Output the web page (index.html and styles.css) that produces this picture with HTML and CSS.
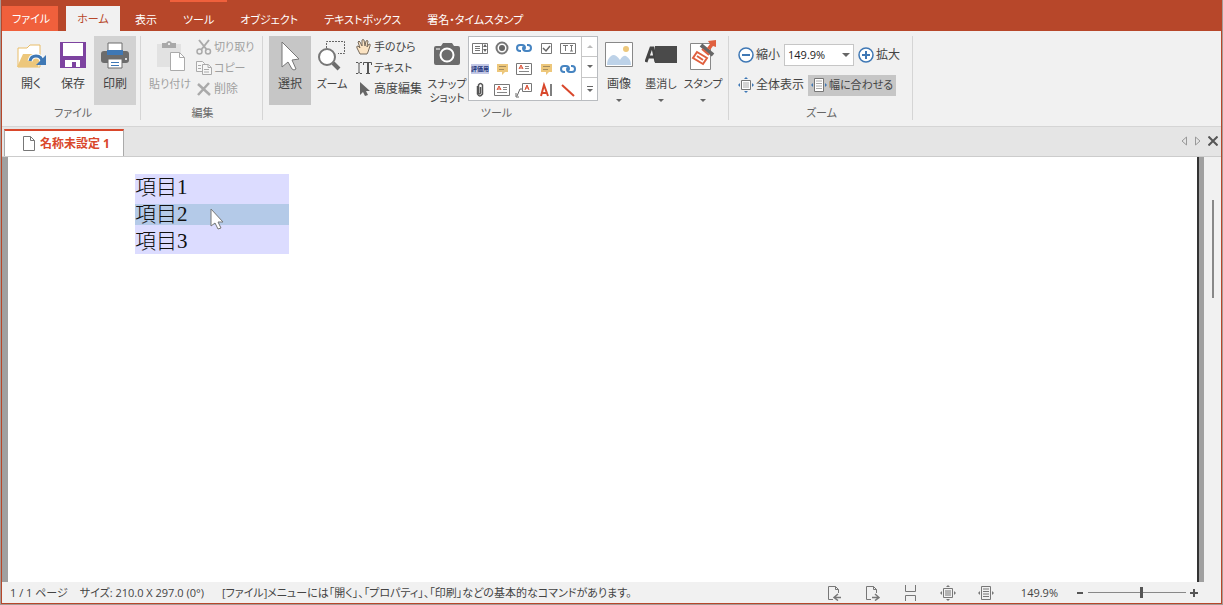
FILE: index.html
```html
<!DOCTYPE html>
<html lang="ja">
<head>
    <meta charset="UTF-8">
    <meta name="viewport" content="width=device-width, initial-scale=1.0">
    <title>名称未設定 1</title>
    <link rel="stylesheet" href="styles.css">
</head>
<body>
    <div class="window">
        <nav class="menu">
            <button type="button" class="menu-tab file">ファイル</button>
            <button type="button" class="menu-tab home active">ホーム</button>
            <button type="button" class="menu-tab">表示</button>
            <button type="button" class="menu-tab tool-context">ツール</button>
            <button type="button" class="menu-tab">オブジェクト</button>
            <button type="button" class="menu-tab">テキストボックス</button>
            <button type="button" class="menu-tab">署名・タイムスタンプ</button>
        </nav>

        <div class="ribbon">
            <!-- ファイル -->
            <section class="group">
                <div class="tools">
                    <button type="button" class="big">
                        <svg width="32" height="32" viewBox="0 0 32 32"><path d="M3 27V8h9l3-3h10v22z" fill="#fff" stroke="#e9bd68"/><path d="M2 27 8 14h18l-3 13z" fill="#edc77b"/><path d="M15 21q1-5 6-5 6 0 6 6" fill="none" stroke="#fff" stroke-width="5"/><path d="M15 21q1-5 6-5 6 0 6 6" fill="none" stroke="#3f78b5" stroke-width="3"/><path d="M31 15v10H21z" fill="#3f78b5"/></svg>
                        <span>開く</span>
                    </button>
                    <button type="button" class="big">
                        <svg width="32" height="32" viewBox="0 0 32 32"><path d="M3 2h26v26H3z" fill="#7d43a0"/><path d="M6 3h20v13H6zM8 20h15v7h-4v-5h-4v5H8z" fill="#fff"/></svg>
                        <span>保存</span>
                    </button>
                    <button type="button" class="big pressed">
                        <svg width="32" height="32" viewBox="0 0 32 32"><rect x="2" y="11" width="28" height="12" rx="3" fill="#6c6c6c"/><path d="M9 3h14v8H9z" fill="#fff" stroke="#6c6c6c"/><path d="M8 10h16v5H8z" fill="#3f78b5"/><path d="M9 19h14v9H9z" fill="#fff" stroke="#6c6c6c"/><path d="M12 22.500h8M12 25.500h8" stroke="#3f78b5"/><circle cx="27" cy="19" r="1" fill="#fff"/></svg>
                        <span>印刷</span>
                    </button>
                </div>
                <h2>ファイル</h2>
            </section>

            <!-- 編集 -->
            <section class="group">
                <div class="tools">
                    <button type="button" class="big wide compact" disabled>
                        <svg width="32" height="32" viewBox="0 0 32 32"><path d="M3 4h24v23H3z" fill="#e2e2e2"/><path d="M8 3h4q3-4 6 0h4v5H8z" fill="#a9a9a9"/><circle cx="15" cy="4" r="1" fill="#fff"/><path d="M16.500 12.500h9l5 5v13h-14z" fill="#fff" stroke="#aaa"/><path d="M25.500 12.500v5h5" fill="none" stroke="#aaa"/></svg>
                        <span>貼り付け</span>
                    </button>
                    <div class="stack edit-stack">
                        <button type="button" class="small compact" disabled>
                            <svg width="16" height="16" viewBox="0 0 16 16"><path d="m3 1 8 10M13 1 5 11" stroke="#aaa" stroke-width="2"/><circle cx="3.500" cy="12.500" r="2.500" fill="none" stroke="#aaa" stroke-width="1.500"/><circle cx="12" cy="12.500" r="2.500" fill="none" stroke="#aaa" stroke-width="1.500"/></svg>
                            切り取り
                        </button>
                        <button type="button" class="small compact" disabled>
                            <svg width="16" height="16" viewBox="0 0 16 16" fill="#f7f7f7" stroke="#aaa"><path d="M.5 1.500h6l2 2v8h-8z"/><path d="M2 5.500h3M2 8.500h3"/><path d="M6.500 4.500h6l3 3v7h-9z"/><path d="M12 4.500v3h3M8 9.500h5M8 12h5"/></svg>
                            コピー
                        </button>
                        <button type="button" class="small" disabled>
                            <svg width="16" height="16" viewBox="0 0 16 16"><path d="m2 3 12 11M13 2 2 14" stroke="#aaa" stroke-width="2.500"/></svg>
                            削除
                        </button>
                    </div>
                </div>
                <h2>編集</h2>
            </section>

            <!-- ツール -->
            <section class="group">
                <div class="tools">
                    <button type="button" class="big selected">
                        <svg width="32" height="32" viewBox="0 0 32 32"><path d="M8 2v25l6-5 4 7q2 2 4 0l-4-9 7-1z" fill="#fff" stroke="#777"/></svg>
                        <span>選択</span>
                    </button>
                    <button type="button" class="big compact">
                        <svg width="32" height="32" viewBox="0 0 32 32"><path d="M10.500 8V1.500h18v12H22" fill="none" stroke="#666" stroke-dasharray="2 1"/><circle cx="11" cy="17" r="8" fill="#fff" stroke="#777" stroke-width="2"/><path d="m17 23 6 6" stroke="#6c6c6c" stroke-width="4"/></svg>
                        <span>ズーム</span>
                    </button>
                    <div class="stack mode-stack">
                        <button type="button" class="small compact">
                            <svg width="16" height="16" viewBox="0 0 16 16"><path d="M4 15 1 9Q0 7 2 7l2 2-2-6q1-2 2 0l2 4V1q1-1 2 0l1 6 1-5q1-1 2 0l-1 6 2-3q2 0 1 2l-2 6-1 2z" fill="#fbe3c2" stroke="#776b5d"/></svg>
                            手のひら
                        </button>
                        <button type="button" class="small compact">
                            <svg width="16" height="16" viewBox="0 0 16 16" fill="none" stroke="#555"><path d="M0 2.500h2l1 1 1-1h2M3 3v10M0 13.500h2l1-1 1 1h2M7.500 5V2.500h8V5M10 13.500h4"/><path d="M12 3v10" stroke-width="2"/></svg>
                            テキスト
                        </button>
                        <button type="button" class="small">
                            <svg width="16" height="16" viewBox="0 0 16 16"><path d="M4 1v13l3-3 2 4 3-1-2-4h4z" fill="#666"/></svg>
                            高度編集
                        </button>
                    </div>
                    <button type="button" class="big compact">
                        <svg width="32" height="32" viewBox="0 0 32 32"><path d="M3 8q0-2 2-2h5l2-3h9l2 3h4q2 0 2 2v15q0 2-2 2H5q-2 0-2-2z" fill="#6c6c6c"/><circle cx="16" cy="15" r="6.500" fill="none" stroke="#fff" stroke-width="2"/><path d="M5 9h4" stroke="#fff"/></svg>
                        <span>スナップ<br>ショット</span>
                    </button>

                    <div class="gallery">
                        <div class="gallery-grid">
                            <button type="button" aria-label="リストボックス"><svg width="18" height="16" viewBox="0 0 18 16" fill="none" stroke="#777"><path d="M1.500 3.500h15v10h-15zM11.500 3v10M4 6.500h5M4 8.500h5M4 10.500h5"/><path d="m14 4 2 3h-4zM14 12l2-3h-4z" fill="#666" stroke="none"/></svg></button>
                            <button type="button" aria-label="ラジオボタン"><svg width="18" height="16" viewBox="0 0 18 16"><circle cx="9" cy="8" r="5.500" fill="#fff" stroke="#777" stroke-width="2"/><circle cx="9" cy="8" r="3" fill="#666"/></svg></button>
                            <button type="button" aria-label="リンク"><svg width="18" height="16" viewBox="0 0 18 16" fill="none" stroke="#4684c1" stroke-width="2"><path d="M6 11H5Q2 11 2 8t3-3h2q3 0 3 3 0 1-1 1"/><path d="M12 5h1q3 0 3 3t-3 3h-2q-3 0-3-3 0-1 1-1"/></svg></button>
                            <button type="button" aria-label="チェックボックス"><svg width="18" height="16" viewBox="0 0 18 16"><path d="M4.500 3.500h10v10h-10z" fill="#fff" stroke="#777"/><path d="m6 8 3 3 4-5" fill="none" stroke="#666" stroke-width="1.500"/></svg></button>
                            <button type="button" aria-label="テキストフィールド"><svg width="18" height="16" viewBox="0 0 18 16" fill="none" stroke="#777"><path d="M1.500 3.500h15v10h-15zM4 5.500h5M6.500 5v6M11 5.500h3M12.500 5v6M11 11h3"/></svg></button>

                            <button type="button" class="mark">評価用</button>
                            <button type="button" aria-label="注釈"><svg width="18" height="16" viewBox="0 0 18 16"><path d="M4 3h11v8h-3l-3 3v-3H4z" fill="#edc77b"/><path d="M6 5.500h7M6 8.500h5" stroke="#a58c5d"/></svg></button>
                            <button type="button" aria-label="テキストボックス"><svg width="18" height="16" viewBox="0 0 18 16"><path d="M1.500 2.500h15v11h-15z" fill="#fff" stroke="#777"/><path d="m4 8 2-4 2 4M4.500 7h3" fill="none" stroke="#d9472b"/><path d="M10 5.500h4M10 7.500h4M4 10.500h10" stroke="#888"/></svg></button>
                            <button type="button" aria-label="コメント"><svg width="18" height="16" viewBox="0 0 18 16"><path d="M4 3h11v8h-3l-3 3v-3H4z" fill="#edc77b"/><path d="M6 5.500h7M6 8.500h5" stroke="#a58c5d"/></svg></button>
                            <button type="button" aria-label="ウェブリンク"><svg width="18" height="16" viewBox="0 0 18 16" fill="none" stroke="#4684c1" stroke-width="2"><path d="M6 11H5Q2 11 2 8t3-3h2q3 0 3 3 0 1-1 1"/><path d="M12 5h1q3 0 3 3t-3 3h-2q-3 0-3-3 0-1 1-1"/></svg></button>

                            <button type="button" aria-label="添付"><svg width="18" height="16" viewBox="0 0 18 16"><path d="M6.500 4v8q2 4 5 0V3q-2-3-4 0v8q1 2 2 0V5" fill="none" stroke="#555" stroke-width="1.500"/></svg></button>
                            <button type="button" aria-label="文章"><svg width="18" height="16" viewBox="0 0 18 16"><path d="M1.500 2.500h15v11h-15z" fill="#fff" stroke="#777"/><path d="m4 8 2-4 2 4M4.500 7h3" fill="none" stroke="#d9472b"/><path d="M10 5.500h4M10 7.500h4M4 10.500h10" stroke="#888"/></svg></button>
                            <button type="button" aria-label="引き出し線"><svg width="18" height="16" viewBox="0 0 18 16"><path d="M7.500 1.500h9v8h-9z" fill="#fff" stroke="#777"/><path d="m10 8 2-5 2 5M10.500 6h3" fill="none" stroke="#d9472b"/><path d="M7 7H5l-3 7M1 11v4h3" fill="none" stroke="#666"/></svg></button>
                            <button type="button" aria-label="テキスト編集"><svg width="18" height="16" viewBox="0 0 18 16"><path d="m4 14 3-11 4 11M5 11h5" fill="none" stroke="#d9472b" stroke-width="2"/><path d="M14 2v12" stroke="#555" stroke-width="1.500"/></svg></button>
                            <button type="button" aria-label="直線"><svg width="18" height="16" viewBox="0 0 18 16"><path d="m3 3 12 11" stroke="#d9472b" stroke-width="2"/></svg></button>
                        </div>
                        <div class="gallery-scroll">
                            <button type="button" aria-label="上へ" disabled><i class="arrow up"></i></button>
                            <button type="button" aria-label="下へ"><i class="arrow"></i></button>
                            <button type="button" aria-label="すべて表示"><i class="bar"></i><i class="arrow"></i></button>
                        </div>
                    </div>

                    <button type="button" class="big">
                        <svg width="32" height="32" viewBox="0 0 32 32"><path d="M2.500 2.500h27v24h-27z" fill="#fff" stroke="#888"/><path d="M4 25q0-6 4-9 4-3 9 4 3-5 6-4 5 3 5 9z" fill="#bdd2e8"/><circle cx="23" cy="9" r="3" fill="#edc77b"/></svg>
                        <span>画像</span>
                        <i class="arrow drop"></i>
                    </button>
                    <button type="button" class="big compact">
                        <svg width="32" height="32" viewBox="0 0 32 32"><path d="m1 22 5-14h2l3 14M4 17h6" fill="none" stroke="#444" stroke-width="3"/><path d="M10 6h22v17H10z" fill="#4a4a4a"/></svg>
                        <span>墨消し</span>
                        <i class="arrow drop"></i>
                    </button>
                    <button type="button" class="big compact">
                        <svg width="32" height="32" viewBox="0 0 32 32"><path d="M3.500 3.500h20v26h-20z" fill="#fff" stroke="#888"/><path d="m10 12 10 6-4 6-10-6z" fill="#fff" stroke="#e0603f" stroke-width="2"/><path d="m10 16 6 4" stroke="#e0603f" stroke-width="2"/><path d="m14 5 12 10" stroke="#666" stroke-width="4"/><path d="m15 9 7 6" stroke="#e0603f" stroke-width="2"/><path d="m20 8 3-4-2-3 8-1v7l-3-1-3 4z" fill="#e0603f"/></svg>
                        <span>スタンプ</span>
                        <i class="arrow drop"></i>
                    </button>
                </div>
                <h2>ツール</h2>
            </section>

            <!-- ズーム -->
            <section class="group">
                <div class="tools zoom-tools">
                    <div class="zoom-row">
                        <button type="button" class="small">
                            <svg width="16" height="16" viewBox="0 0 16 16" fill="#fff" stroke="#3f78b5" stroke-width="1.500"><circle cx="8" cy="8" r="7"/><path d="M4 8h8" stroke-width="2"/></svg>
                            縮小
                        </button>
                        <div class="zoom-box">
                            <select aria-label="ズーム倍率">
                                <option>149.9%</option>
                                <option>100%</option>
                            </select>
                            <i class="arrow wide-arrow"></i>
                        </div>
                        <button type="button" class="small">
                            <svg width="16" height="16" viewBox="0 0 16 16" fill="#fff" stroke="#3f78b5" stroke-width="1.500"><circle cx="8" cy="8" r="7"/><path d="M4 8h8M8 4v8" stroke-width="2"/></svg>
                            拡大
                        </button>
                    </div>
                    <div class="zoom-row">
                        <button type="button" class="small">
                            <svg width="16" height="16" viewBox="0 0 16 16"><path d="M3.500 3.500h9v9h-9z" fill="#fff" stroke="#777"/><path d="M5 6h6M5 8h6M5 10h6" stroke="#aaa"/><path d="m8 0 2 2H6zM8 16l2-2H6zM0 8l2-2v4zM16 8l-2-2v4z" fill="#3f78b5"/></svg>
                            全体表示
                        </button>
                        <button type="button" class="small fit compact">
                            <svg width="16" height="16" viewBox="0 0 16 16"><path d="M3.500 1.500h9v13h-9z" fill="#fff" stroke="#777"/><path d="M5 4h6M5 6.500h6M5 9h6M5 11.500h6" stroke="#aaa"/><path d="m0 8 2-2v4zM16 8l-2-2v4z" fill="#3f78b5"/></svg>
                            幅に合わせる
                        </button>
                    </div>
                </div>
                <h2>ズーム</h2>
            </section>
        </div>

        <div class="doc-tabs">
            <button type="button" class="doc-tab">
                <svg width="12" height="15" viewBox="0 0 12 15"><path d="M.5.5h7l4 4v10H.5z" fill="#fff" stroke="#777"/><path d="M7.500.5v4h4" fill="none" stroke="#777"/></svg>
                名称未設定 1
            </button>
            <div class="doc-nav">
                <button type="button" aria-label="前のタブ"><svg width="8" height="10" viewBox="0 0 8 10"><path d="M6.500 1v8L2 5z" fill="none" stroke="#999"/></svg></button>
                <button type="button" aria-label="次のタブ"><svg width="8" height="10" viewBox="0 0 8 10"><path d="M1.500 1v8L6 5z" fill="none" stroke="#999"/></svg></button>
                <button type="button" aria-label="閉じる"><svg width="10" height="10" viewBox="0 0 10 10"><path d="m.5.5 9 9M9.500.5l-9 9" stroke="#555" stroke-width="2"/></svg></button>
            </div>
        </div>

        <main class="workspace">
            <div class="page">
                <ul class="list-field" role="listbox" aria-label="リスト">
                    <li role="option">項目1</li>
                    <li role="option" aria-selected="true" class="current">項目2</li>
                    <li role="option">項目3</li>
                </ul>
                <svg class="cursor" width="14" height="22" viewBox="0 0 14 22"><path d="M1 1v17l4-3 3 6 3-1-3-6h5z" fill="#fff" stroke="#777"/></svg>
            </div>
            <div class="scrollbar"><div class="thumb"></div></div>
        </main>

        <footer class="status">
            <span>1 / 1 ページ</span>
            <span>サイズ: 210.0 X 297.0 (0°)</span>
            <span class="hint">[ファイル]メニューには「開く」、「プロパティ」、「印刷」などの基本的なコマンドがあります。</span>
            <div class="views">
                <button type="button" aria-label="前のページ"><svg width="16" height="16" viewBox="0 0 16 16" fill="none" stroke="#777"><path d="M7 14.500H2.500V1.500h7l3 3V8M9.500 1.500v3h3"/><path d="M15 12.500H9M12 9l-4 3.500 4 3" stroke-width="1.500"/></svg></button>
                <button type="button" aria-label="次のページ"><svg width="16" height="16" viewBox="0 0 16 16" fill="none" stroke="#777"><path d="M7 14.500H2.500V1.500h7l3 3V8M9.500 1.500v3h3"/><path d="M8 12.500h6M11 9l4 3.500-4 3" stroke-width="1.500"/></svg></button>
                <button type="button" aria-label="連続ページ"><svg width="16" height="16" viewBox="0 0 16 16" fill="none" stroke="#777"><path d="M3.500 0v6.500h10V0M3.500 16v-5.500h10V16"/></svg></button>
                <button type="button" aria-label="全体表示"><svg width="16" height="16" viewBox="0 0 16 16"><path d="M3.500 3.500h9v9h-9zM5 6h6M5 8h6M5 10h6" fill="none" stroke="#777"/><path d="m8 0 2 2H6zM8 16l2-2H6zM0 8l2-2v4zM16 8l-2-2v4z" fill="#777"/></svg></button>
                <button type="button" aria-label="幅に合わせる"><svg width="16" height="16" viewBox="0 0 16 16"><path d="M3.500 1.500h9v13h-9zM5 4h6M5 6.500h6M5 9h6M5 11.500h6" fill="none" stroke="#777"/><path d="m0 8 2-2v4zM16 8l-2-2v4z" fill="#777"/></svg></button>
            </div>
            <label for="zoom">149.9%</label>
            <div class="zoom-slider">
                <button type="button" aria-label="縮小"><svg width="8" height="8" viewBox="0 0 8 8"><path d="M1 4h6" stroke="#555" stroke-width="2"/></svg></button>
                <input type="range" id="zoom" min="0" max="100" value="55">
                <button type="button" aria-label="拡大"><svg width="8" height="8" viewBox="0 0 8 8"><path d="M0 4h8M4 0v8" stroke="#555" stroke-width="2"/></svg></button>
            </div>
        </footer>
    </div>
</body>
</html>
```

FILE: styles.css
```css
* {
    box-sizing: border-box;
}

body {
    margin: 0;
    padding: 0 1px 1px;
    height: 100vh;
    font-family: "Open Sans", "Noto Sans CJK JP", sans-serif;
    font-size: 12px;
    line-height: 14px;
    font-feature-settings: "palt";
    color: #444;
    background: #a89b97;
}

button {
    border: 0;
    padding: 0;
    background: none;
    color: inherit;
    font: inherit;
    font-feature-settings: inherit;
    white-space: nowrap;
}

button:disabled {
    color: #a0a0a0;
}

svg {
    display: block;
    flex: none;
}

.window {
    height: 100%;
    display: flex;
    flex-direction: column;
    border: solid #b7472a;
    border-width: 0 1px 1px;
    background: #f1f1f1;
}

/* menu */
.menu {
    display: flex;
    height: 31px;
    background: #b7472a;
    color: #fff;
    font-size: 11px;
}

.menu-tab {
    padding: 6px 13px 0;
    border-top: 2px solid transparent;
}

.menu-tab.file,
.menu-tab.home {
    margin-top: 6px;
    padding: 0 10px;
    border-top: 0;
}

.menu-tab.file {
    width: 56px;
    background: #f0603c;
}

.menu-tab.home {
    width: 54px;
    margin-left: 8px;
    margin-right: 2px;
    background: #f1f1f1;
    color: #b7472a;
}

.menu-tab.tool-context {
    border-top-color: #f0603c;
}

/* ribbon */
.ribbon {
    display: flex;
    padding: 5px 0 6px;
    border-bottom: 1px solid #d5d5d5;
}

.group {
    padding: 0 4px 0 6px;
    border-right: 1px solid #d5d5d5;
}

.group:first-child {
    padding-left: 8px;
}

.group h2 {
    margin: 0;
    font-size: 11px;
    font-weight: normal;
    line-height: 15px;
    text-align: center;
    color: #666;
}

.tools {
    display: flex;
    height: 69px;
}

.compact {
    font-size: 11px;
}

.big {
    display: flex;
    flex-direction: column;
    align-items: center;
    width: 42px;
    padding-top: 4px;
    gap: 5px;
    line-height: 14px;
}

.big.wide {
    width: 46px;
}

.big.pressed {
    background: #d2d2d2;
}

.big.selected {
    background: #c6c6c6;
}

.stack {
    display: flex;
    flex-direction: column;
    padding: 0 3px;
}

.edit-stack {
    width: 65px;
}

.mode-stack {
    width: 73px;
}

.small {
    display: flex;
    align-items: center;
    height: 21px;
    gap: 2px;
}

.arrow {
    border: 3px solid transparent;
    border-top-color: #666;
    border-bottom: 0;
}

.arrow.up {
    border-top: 0;
    border-bottom: 3px solid #bbb;
}

.arrow.drop {
    margin-top: 3px;
}

.arrow.wide-arrow {
    border-width: 4px 4px 0;
}

.gallery {
    display: flex;
    width: 130px;
    height: 65px;
    border: 1px solid #b9bcc0;
    background: #fff;
}

.gallery-grid {
    flex: 1;
    display: grid;
    grid-template-columns: repeat(5, 22px);
    grid-template-rows: repeat(3, 21px);
}

.gallery-grid button {
    display: flex;
    align-items: center;
    justify-content: center;
}

.gallery-grid .mark {
    align-self: center;
    justify-self: center;
    width: 18px;
    background: #c3c8e6;
    color: #24357c;
    font-size: 6px;
    font-weight: bold;
    line-height: 10px;
}

.gallery-scroll {
    display: grid;
    width: 16px;
    border-left: 1px solid #c6c6c6;
}

.gallery-scroll button {
    display: flex;
    flex-direction: column;
    align-items: center;
    justify-content: center;
    gap: 2px;
}

.gallery-scroll button + button {
    border-top: 1px solid #c6c6c6;
}

.bar {
    width: 6px;
    height: 1px;
    background: #666;
}

.zoom-tools {
    flex-direction: column;
    padding: 8px 8px 0 3px;
    gap: 8px;
}

.zoom-row {
    display: flex;
    align-items: center;
    gap: 4px;
    height: 22px;
}

.zoom-box {
    display: flex;
    align-items: center;
    width: 70px;
    padding-right: 3px;
    border: 1px solid #c6c6c6;
    background: #fff;
}

.zoom-box select {
    flex: 1;
    min-width: 0;
    height: 20px;
    padding: 0 3px;
    border: 0;
    appearance: none;
    background: none;
    color: #222;
    font: inherit;
    font-size: 11px;
}

.small.fit {
    padding: 0 3px;
    background: #c6c6c6;
}

/* document tabs */
.doc-tabs {
    display: flex;
    justify-content: space-between;
    height: 30px;
    padding: 2px 3px 0 2px;
    border-bottom: 1px solid #ccc;
    background: #e5e5e5;
}

.doc-tab {
    display: flex;
    align-items: center;
    gap: 5px;
    width: 120px;
    padding-left: 18px;
    border: 1px solid #aaa;
    border-top: 2px solid #d9472b;
    border-bottom: 0;
    background: #fff;
    color: #d9472b;
    font-weight: bold;
}

.doc-nav {
    display: flex;
    align-items: center;
    gap: 6px;
    padding-bottom: 4px;
}

/* document area */
.workspace {
    flex: 1;
    display: flex;
    min-height: 0;
}

.page {
    flex: 1;
    position: relative;
    padding: 17px 0 0 127px;
    border-left: 6px solid #a0a0a0;
    border-right: 5px solid #a0a0a0;
    box-shadow: inset -2px 0 #333;
    background: #fff;
}

.list-field {
    display: flex;
    flex-direction: column;
    gap: 6px;
    width: 154px;
    margin: 0;
    padding: 3px 0 2px;
    list-style: none;
    background: #dcdcff;
    color: #111;
    font-family: "Liberation Serif", "Noto Sans CJK JP", serif;
    font-size: 21px;
    font-weight: 300;
    line-height: 21px;
    font-feature-settings: normal;
}

.list-field .current {
    background: #b4cae8;
}

.cursor {
    position: absolute;
    top: 51px;
    left: 202px;
}

.scrollbar {
    width: 17px;
    padding: 43px 7px 0 8px;
}

.thumb {
    height: 98px;
    background: #888;
}

/* status bar */
.status {
    display: flex;
    align-items: center;
    gap: 12px;
    height: 21px;
    padding: 0 23px 0 8px;
    font-size: 11px;
    white-space: nowrap;
}

.status .hint {
    flex: 1;
    padding-left: 6px;
}

.views {
    display: flex;
    gap: 22px;
    padding-right: 15px;
}

.zoom-slider {
    display: flex;
    align-items: center;
    gap: 4px;
    padding-left: 6px;
}

.zoom-slider input {
    width: 98px;
    height: 12px;
    margin: 0;
    appearance: none;
    background: linear-gradient(#888, #888) center / 100% 1px no-repeat;
}

.zoom-slider input::-webkit-slider-thumb {
    appearance: none;
    width: 3px;
    height: 11px;
    background: #555;
}
```
